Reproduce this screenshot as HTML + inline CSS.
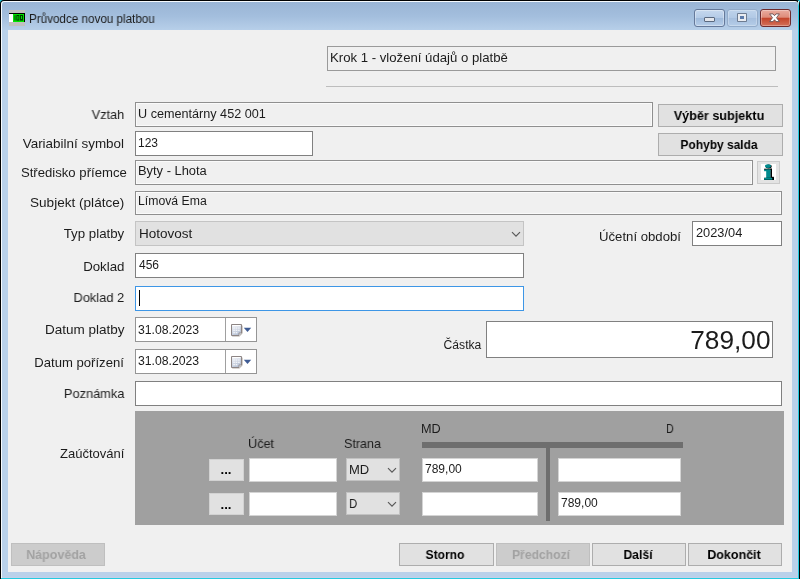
<!DOCTYPE html>
<html lang="cs">
<head>
<meta charset="utf-8">
<title>Průvodce novou platbou</title>
<style>
*{box-sizing:border-box;margin:0;padding:0}
html,body{width:800px;height:579px;overflow:hidden}
body{position:relative;background:#24cbe0;font-family:"Liberation Sans",sans-serif;color:#000}
body>div,body>svg{position:absolute}
.t{white-space:nowrap;will-change:transform}
</style>
</head>
<body>
<div class="" style="left:0px;top:0px;width:800px;height:590px;background:#000;border-radius:4px 4px 0 0"></div>
<div class="" style="left:798px;top:6px;width:1px;height:573px;background:#24cbe0"></div>
<div class="" style="left:1px;top:1px;width:797px;height:577px;background:#f6fafd;border-radius:3px 3px 0 0"></div>
<div class="" style="left:798px;top:1px;width:1px;height:5px;background:linear-gradient(#fff,#24cbe0)"></div>
<div class="" style="left:1px;top:578px;width:798px;height:1px;background:#24cbe0"></div>
<div class="" style="left:2px;top:2px;width:796px;height:576px;background:#b9d1ea;border-radius:3px 3px 0 0"></div>
<div class="" style="left:2px;top:2px;width:796px;height:28px;background:linear-gradient(#9ab5d5 0%,#a3bedd 50%,#b7cfe9 100%);border-radius:3px 3px 0 0"></div>
<div class="" style="left:2px;top:577px;width:796px;height:1px;background:#c4d0e8"></div>
<div class="" style="left:8px;top:30px;width:784px;height:542px;background:#f0f0f0"></div>
<div class="" style="left:9px;top:10px;width:16px;height:16px;background:#c0c0c0"></div>
<div class="" style="left:9px;top:13px;width:16px;height:1px;background:#000"></div>
<div class="" style="left:24px;top:13px;width:1px;height:9px;background:#000"></div>
<div class="" style="left:9px;top:14px;width:4px;height:8px;background:#fff"></div>
<div class="" style="left:13px;top:14px;width:11px;height:8px;background:#00e400"></div>
<svg style="left:13px;top:14px" width="11" height="8" viewBox="0 0 11 8"><g fill="none" stroke="#003c00" stroke-width="1"><path d="M2 1.2V6.5"/><rect x="3.9" y="1.5" width="2" height="4.6"/><rect x="7.5" y="1.5" width="2" height="4.6"/></g></svg>
<div class="" style="left:694px;top:9px;width:31px;height:18px;border:1px solid #65799a;border-radius:3px;background:linear-gradient(#c6d8ee 0%,#b4cbe7 47%,#9fbadb 53%,#b6cde9 100%);box-shadow:inset 0 0 0 1px rgba(255,255,255,.35)"></div>
<div class="" style="left:704px;top:17px;width:11px;height:5px;border:1px solid #5b6a80;border-radius:1px;background:#e3e6ec"></div>
<div class="" style="left:727px;top:9px;width:31px;height:18px;border:1px solid #93abc9;border-radius:3px;background:linear-gradient(#bed3eb 0%,#b2c9e5 47%,#a6bfde 53%,#b5cde8 100%);box-shadow:inset 0 0 0 1px rgba(255,255,255,.25)"></div>
<div class="" style="left:737px;top:13px;width:10px;height:9px;background:#6d7b90;border-radius:1px"></div>
<div class="" style="left:738px;top:14px;width:8px;height:7px;background:#e9ecf1"></div>
<div class="" style="left:740px;top:16px;width:4px;height:3px;background:#5d7cab"></div>
<div class="" style="left:760px;top:9px;width:31px;height:18px;border:1px solid #6e2a2c;border-radius:3px;background:linear-gradient(#eaac9f 0%,#de8c7a 45%,#c4452b 52%,#d3705a 100%);box-shadow:inset 0 0 0 1px rgba(255,255,255,.3)"></div>
<svg style="left:769px;top:13px" width="11" height="10" viewBox="0 0 11 10"><path d="M0.6 0.9 H4 L5.5 2.7 L7 0.9 H10.4 L7.5 4.7 L10.4 8.6 H7 L5.5 6.7 L4 8.6 H0.6 L3.5 4.7 Z" fill="#fff" stroke="#6a5558" stroke-width="0.9" stroke-linejoin="round"/></svg>
<div class="" style="left:327px;top:46px;width:449px;height:25px;border:1px solid #9a9a9a"></div>
<div class="" style="left:326px;top:86px;width:452px;height:1px;background:#bdbdbd"></div>
<div class="" style="left:135px;top:102px;width:518px;height:25px;border:1px solid #8f8f8f;background:#f0f0f0;box-shadow:inset 0 0 0 1px #fafafa"></div>
<div class="" style="left:135px;top:131px;width:178px;height:25px;border:1px solid #808080;background:#fff"></div>
<div class="" style="left:135px;top:160px;width:618px;height:25px;border:1px solid #8f8f8f;background:#f0f0f0;box-shadow:inset 0 0 0 1px #fafafa"></div>
<div class="" style="left:135px;top:191px;width:647px;height:24px;border:1px solid #8f8f8f;background:#f0f0f0;box-shadow:inset 0 0 0 1px #fafafa"></div>
<div class="" style="left:135px;top:221px;width:389px;height:25px;border:1px solid #c4c4c4;background:#e1e1e1"></div>
<div class="" style="left:692px;top:221px;width:90px;height:25px;border:1px solid #808080;background:#fff"></div>
<div class="" style="left:135px;top:253px;width:389px;height:25px;border:1px solid #808080;background:#fff"></div>
<div class="" style="left:135px;top:286px;width:389px;height:25px;border:1px solid #3d96e6;background:#fff"></div>
<div class="" style="left:139px;top:290px;width:1px;height:16px;background:#000"></div>
<div class="" style="left:486px;top:321px;width:287px;height:37px;border:1px solid #808080;background:#fff"></div>
<div class="" style="left:135px;top:381px;width:647px;height:25px;border:1px solid #808080;background:#fff"></div>
<div class="" style="left:658px;top:104px;width:125px;height:23px;border:1px solid #adadad;background:#e1e1e1"></div>
<div class="" style="left:658px;top:133px;width:125px;height:23px;border:1px solid #adadad;background:#e1e1e1"></div>
<div class="" style="left:757px;top:161px;width:23px;height:23px;border:1px solid #cbcbcb;background:#e3e3e3"></div>
<svg style="left:761px;top:164px" width="15" height="16" viewBox="0 0 15 16"><rect width="15" height="16" fill="#fff"/><ellipse cx="7.7" cy="2.5" rx="3" ry="1.9" fill="#000"/><ellipse cx="7" cy="2.1" rx="3" ry="1.9" fill="#008b8e"/><rect x="3.1" y="4.7" width="7.9" height="1.2" fill="#000"/><rect x="9.3" y="4.7" width="1.7" height="9.5" fill="#000"/><rect x="3.1" y="5.6" width="6.3" height="1.6" fill="#008b8e"/><rect x="5.2" y="5.6" width="4.2" height="8.6" fill="#008b8e"/><rect x="10.6" y="12.8" width="2.3" height="3.2" fill="#000"/><rect x="3.1" y="13.8" width="9.8" height="2.2" fill="#000"/><rect x="3.1" y="13.8" width="8.2" height="1.9" fill="#008b8e"/></svg>
<svg style="left:511px;top:231px" width="10" height="7" viewBox="0 0 10 7"><path d="M1 1.2 L5 5.2 L9 1.2" fill="none" stroke="#585858" stroke-width="1.15"/></svg>
<div class="" style="left:135px;top:317px;width:122px;height:25px;border:1px solid #959595;background:#fff"></div>
<div class="" style="left:225px;top:318px;width:1px;height:23px;background:#a0a0a0"></div>
<svg style="left:231px;top:324px" width="21" height="13" viewBox="0 0 21 13"><defs><linearGradient id="cg317" x1="0" y1="0" x2="0.6" y2="1"><stop offset="0" stop-color="#f4f6fa"/><stop offset="1" stop-color="#b4bfd3"/></linearGradient></defs><path d="M1.2 12.2 H8.4 L11.3 9.4 V1.6" fill="none" stroke="#c9c4bf" stroke-width="1"/><path d="M0.5 0.5 H10.5 V9 L8 11.5 H0.5 Z" fill="url(#cg317)" stroke="#8d8584" stroke-width="1"/><path d="M10.5 9 H8 V11.5" fill="#eef0f5" stroke="#8d8584" stroke-width="0.8"/><path d="M1.5 1.6 H9.5" stroke="#fff" stroke-width="1.2"/><g fill="#f2f4f8"><rect x="2.3" y="3.4" width="1.6" height="1.3"/><rect x="4.7" y="3.4" width="1.6" height="1.3"/><rect x="7.1" y="3.4" width="1.6" height="1.3"/><rect x="2.3" y="5.7" width="1.6" height="1.3"/><rect x="4.7" y="5.7" width="1.6" height="1.3"/><rect x="7.1" y="5.7" width="1.6" height="1.3"/><rect x="2.3" y="8" width="1.6" height="1.3"/><rect x="4.7" y="8" width="1.6" height="1.3"/></g><path d="M12.8 3.7 H20.2 L16.5 7.9 Z" fill="#3f5c94"/></svg>
<div class="" style="left:135px;top:349px;width:122px;height:25px;border:1px solid #959595;background:#fff"></div>
<div class="" style="left:225px;top:350px;width:1px;height:23px;background:#a0a0a0"></div>
<svg style="left:231px;top:356px" width="21" height="13" viewBox="0 0 21 13"><defs><linearGradient id="cg349" x1="0" y1="0" x2="0.6" y2="1"><stop offset="0" stop-color="#f4f6fa"/><stop offset="1" stop-color="#b4bfd3"/></linearGradient></defs><path d="M1.2 12.2 H8.4 L11.3 9.4 V1.6" fill="none" stroke="#c9c4bf" stroke-width="1"/><path d="M0.5 0.5 H10.5 V9 L8 11.5 H0.5 Z" fill="url(#cg349)" stroke="#8d8584" stroke-width="1"/><path d="M10.5 9 H8 V11.5" fill="#eef0f5" stroke="#8d8584" stroke-width="0.8"/><path d="M1.5 1.6 H9.5" stroke="#fff" stroke-width="1.2"/><g fill="#f2f4f8"><rect x="2.3" y="3.4" width="1.6" height="1.3"/><rect x="4.7" y="3.4" width="1.6" height="1.3"/><rect x="7.1" y="3.4" width="1.6" height="1.3"/><rect x="2.3" y="5.7" width="1.6" height="1.3"/><rect x="4.7" y="5.7" width="1.6" height="1.3"/><rect x="7.1" y="5.7" width="1.6" height="1.3"/><rect x="2.3" y="8" width="1.6" height="1.3"/><rect x="4.7" y="8" width="1.6" height="1.3"/></g><path d="M12.8 3.7 H20.2 L16.5 7.9 Z" fill="#3f5c94"/></svg>
<div class="" style="left:135px;top:411px;width:649px;height:114px;background:#a0a0a0"></div>
<div class="" style="left:422px;top:442px;width:261px;height:6px;background:#6e6e6e"></div>
<div class="" style="left:546px;top:448px;width:4px;height:73px;background:#6e6e6e"></div>
<div class="" style="left:209px;top:459px;width:35px;height:22px;border:1px solid #d2d2d2;background:#e1e1e1"></div>
<div class="" style="left:249px;top:458px;width:88px;height:24px;border:1px solid #d4d4d4;background:#fff"></div>
<div class="" style="left:346px;top:458px;width:54px;height:23px;border:1px solid #c2c2c2;background:#e1e1e1"></div>
<svg style="left:387px;top:467px" width="10" height="7" viewBox="0 0 10 7"><path d="M1 1.2 L5 5.2 L9 1.2" fill="none" stroke="#585858" stroke-width="1.15"/></svg>
<div class="" style="left:422px;top:458px;width:116px;height:24px;border:1px solid #d4d4d4;background:#fff"></div>
<div class="" style="left:558px;top:458px;width:123px;height:24px;border:1px solid #d4d4d4;background:#fff"></div>
<div class="" style="left:209px;top:493px;width:35px;height:22px;border:1px solid #d2d2d2;background:#e1e1e1"></div>
<div class="" style="left:249px;top:492px;width:88px;height:24px;border:1px solid #d4d4d4;background:#fff"></div>
<div class="" style="left:346px;top:492px;width:54px;height:23px;border:1px solid #c2c2c2;background:#e1e1e1"></div>
<svg style="left:387px;top:501px" width="10" height="7" viewBox="0 0 10 7"><path d="M1 1.2 L5 5.2 L9 1.2" fill="none" stroke="#585858" stroke-width="1.15"/></svg>
<div class="" style="left:422px;top:492px;width:116px;height:24px;border:1px solid #d4d4d4;background:#fff"></div>
<div class="" style="left:558px;top:492px;width:123px;height:24px;border:1px solid #d4d4d4;background:#fff"></div>
<div class="" style="left:11px;top:543px;width:94px;height:23px;border:1px solid #bfbfbf;background:#cccccc"></div>
<div class="" style="left:399px;top:543px;width:95px;height:23px;border:1px solid #adadad;background:#e1e1e1"></div>
<div class="" style="left:496px;top:543px;width:94px;height:23px;border:1px solid #bfbfbf;background:#cccccc"></div>
<div class="" style="left:592px;top:543px;width:94px;height:23px;border:1px solid #adadad;background:#e1e1e1"></div>
<div class="" style="left:688px;top:543px;width:94px;height:23px;border:1px solid #adadad;background:#e1e1e1"></div>
<div class="t" style="top:11px;font-size:12px;line-height:16px;height:16px;color:#1c1c1c;left:28.83px;transform-origin:0 0;transform:scaleX(0.9717);">Průvodce novou platbou</div>
<div class="t" style="top:49px;font-size:13px;line-height:17px;height:17px;color:#1c1c1c;left:330.08px;transform-origin:0 0;transform:scaleX(1.0127);">Krok 1 - vložení údajů o platbě</div>
<div class="t" style="top:106px;font-size:13px;line-height:17px;height:17px;color:#1c1c1c;right:675.79px;transform-origin:100% 0;transform:scaleX(0.9799);">Vztah</div>
<div class="t" style="top:135px;font-size:13px;line-height:17px;height:17px;color:#1c1c1c;right:675.77px;transform-origin:100% 0;transform:scaleX(1.0337);">Variabilní symbol</div>
<div class="t" style="top:164px;font-size:13px;line-height:17px;height:17px;color:#1c1c1c;right:673.28px;transform-origin:100% 0;transform:scaleX(1.0102);">Středisko příemce</div>
<div class="t" style="top:194px;font-size:13px;line-height:17px;height:17px;color:#1c1c1c;right:675.77px;transform-origin:100% 0;transform:scaleX(1.0443);">Subjekt (plátce)</div>
<div class="t" style="top:225px;font-size:13px;line-height:17px;height:17px;color:#1c1c1c;right:675.77px;transform-origin:100% 0;transform:scaleX(1.0222);">Typ platby</div>
<div class="t" style="top:258px;font-size:13px;line-height:17px;height:17px;color:#1c1c1c;right:675.78px;transform-origin:100% 0;transform:scaleX(1.0213);">Doklad</div>
<div class="t" style="top:289px;font-size:13px;line-height:17px;height:17px;color:#1c1c1c;right:675.79px;transform-origin:100% 0;transform:scaleX(0.9906);">Doklad 2</div>
<div class="t" style="top:321px;font-size:13px;line-height:17px;height:17px;color:#1c1c1c;right:675.77px;transform-origin:100% 0;transform:scaleX(1.0390);">Datum platby</div>
<div class="t" style="top:354px;font-size:13px;line-height:17px;height:17px;color:#1c1c1c;right:675.78px;transform-origin:100% 0;transform:scaleX(1.0080);">Datum pořízení</div>
<div class="t" style="top:385px;font-size:13px;line-height:17px;height:17px;color:#1c1c1c;right:675.79px;transform-origin:100% 0;transform:scaleX(0.9863);">Poznámka</div>
<div class="t" style="top:445px;font-size:13px;line-height:17px;height:17px;color:#1c1c1c;right:675.78px;transform-origin:100% 0;transform:scaleX(1.0001);">Zaúčtování</div>
<div class="t" style="top:228px;font-size:13px;line-height:17px;height:17px;color:#1c1c1c;right:119.08px;transform-origin:100% 0;transform:scaleX(1.0121);">Účetní období</div>
<div class="t" style="top:337px;font-size:12px;line-height:16px;height:16px;color:#1c1c1c;right:318.41px;transform-origin:100% 0;transform:scaleX(1.0109);">Částka</div>
<div class="t" style="top:435px;font-size:13px;line-height:17px;height:17px;color:#1c1c1c;left:248.09px;transform-origin:0 0;transform:scaleX(0.9737);">Účet</div>
<div class="t" style="top:435px;font-size:13px;line-height:17px;height:17px;color:#1c1c1c;left:344.20px;transform-origin:0 0;transform:scaleX(0.9666);">Strana</div>
<div class="t" style="top:421px;font-size:12px;line-height:16px;height:16px;color:#1c1c1c;left:420.59px;transform-origin:0 0;transform:scaleX(1.0587);">MD</div>
<div class="t" style="top:421px;font-size:12px;line-height:16px;height:16px;color:#1c1c1c;left:666.41px;transform-origin:0 0;transform:scaleX(0.8958);">D</div>
<div class="t" style="top:106px;font-size:12px;line-height:16px;height:16px;color:#1c1c1c;left:138.35px;transform-origin:0 0;transform:scaleX(1.0524);">U cementárny 452 001</div>
<div class="t" style="top:135px;font-size:12px;line-height:16px;height:16px;color:#1c1c1c;left:138.37px;transform-origin:0 0;transform:scaleX(0.9993);">123</div>
<div class="t" style="top:163px;font-size:12px;line-height:16px;height:16px;color:#1c1c1c;left:138.34px;transform-origin:0 0;transform:scaleX(1.0740);">Byty - Lhota</div>
<div class="t" style="top:193px;font-size:12px;line-height:16px;height:16px;color:#1c1c1c;left:138.36px;transform-origin:0 0;transform:scaleX(1.0209);">Límová Ema</div>
<div class="t" style="top:225px;font-size:13px;line-height:17px;height:17px;color:#1c1c1c;left:139.07px;transform-origin:0 0;transform:scaleX(1.0394);">Hotovost</div>
<div class="t" style="top:225px;font-size:12px;line-height:16px;height:16px;color:#1c1c1c;left:695.84px;transform-origin:0 0;transform:scaleX(1.0663);">2023/04</div>
<div class="t" style="top:257px;font-size:12px;line-height:16px;height:16px;color:#1c1c1c;left:138.62px;transform-origin:0 0;transform:scaleX(0.9869);">456</div>
<div class="t" style="top:322px;font-size:12px;line-height:16px;height:16px;color:#1c1c1c;left:138.36px;transform-origin:0 0;transform:scaleX(1.0184);">31.08.2023</div>
<div class="t" style="top:353px;font-size:12px;line-height:16px;height:16px;color:#1c1c1c;left:138.36px;transform-origin:0 0;transform:scaleX(1.0184);">31.08.2023</div>
<div class="t" style="top:325px;font-size:26px;line-height:30px;height:30px;color:#1c1c1c;right:29.56px;transform-origin:100% 0;transform:scaleX(1.0092);">789,00</div>
<div class="t" style="top:461px;font-size:12px;line-height:16px;height:16px;color:#1c1c1c;left:425.12px;transform-origin:0 0;transform:scaleX(1.0018);">789,00</div>
<div class="t" style="top:495px;font-size:12px;line-height:16px;height:16px;color:#1c1c1c;left:561.37px;transform-origin:0 0;transform:scaleX(1.0018);">789,00</div>
<div class="t" style="top:461px;font-size:13px;line-height:17px;height:17px;color:#1c1c1c;left:349.34px;transform-origin:0 0;transform:scaleX(0.9809);">MD</div>
<div class="t" style="top:495px;font-size:13px;line-height:17px;height:17px;color:#1c1c1c;left:349.38px;transform-origin:0 0;transform:scaleX(0.8873);">D</div>
<div class="t" style="top:107px;font-size:13px;line-height:17px;height:17px;font-weight:bold;left:619.10px;width:200px;text-align:center;transform-origin:50% 0;transform:scaleX(0.9712);">Výběr subjektu</div>
<div class="t" style="top:136px;font-size:13px;line-height:17px;height:17px;font-weight:bold;left:618.75px;width:200px;text-align:center;transform-origin:50% 0;transform:scaleX(0.9190);">Pohyby salda</div>
<div class="t" style="top:546px;font-size:13px;line-height:17px;height:17px;font-weight:bold;color:#a2a2a2;left:-43.60px;width:200px;text-align:center;transform-origin:50% 0;transform:scaleX(0.9610);">Nápověda</div>
<div class="t" style="top:546px;font-size:13px;line-height:17px;height:17px;font-weight:bold;left:345.15px;width:200px;text-align:center;transform-origin:50% 0;transform:scaleX(0.9267);">Storno</div>
<div class="t" style="top:546px;font-size:13px;line-height:17px;height:17px;font-weight:bold;color:#a2a2a2;left:441.45px;width:200px;text-align:center;transform-origin:50% 0;transform:scaleX(0.9339);">Předchozí</div>
<div class="t" style="top:546px;font-size:13px;line-height:17px;height:17px;font-weight:bold;left:537.80px;width:200px;text-align:center;transform-origin:50% 0;transform:scaleX(0.9370);">Další</div>
<div class="t" style="top:546px;font-size:13px;line-height:17px;height:17px;font-weight:bold;left:633.55px;width:200px;text-align:center;transform-origin:50% 0;transform:scaleX(0.9622);">Dokončit</div>
<div class="t" style="top:461px;font-size:13px;line-height:17px;height:17px;font-weight:bold;left:125.60px;width:200px;text-align:center;transform-origin:50% 0;transform:scaleX(1.0163);">...</div>
<div class="t" style="top:496px;font-size:13px;line-height:17px;height:17px;font-weight:bold;left:125.60px;width:200px;text-align:center;transform-origin:50% 0;transform:scaleX(1.0163);">...</div>
</body>
</html>
